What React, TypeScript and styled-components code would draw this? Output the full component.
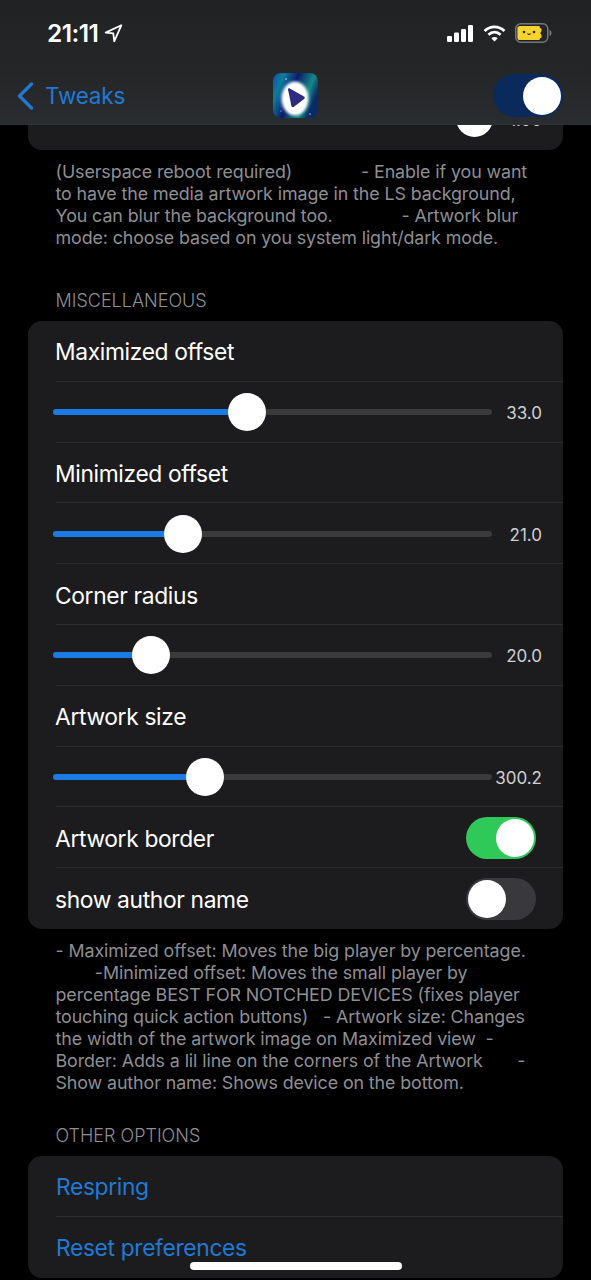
import React from 'react';
import styled, { createGlobalStyle } from 'styled-components';

const GlobalStyle = createGlobalStyle`
	html, body {
		margin: 0;
		padding: 0;
		background: #000;
	}
	* {
		box-sizing: border-box;
	}
`;

const sliders = [
	{ label: 'Maximized offset', value: '33.0', percent: 44.2 },
	{ label: 'Minimized offset', value: '21.0', percent: 29.6 },
	{ label: 'Corner radius', value: '20.0', percent: 22.3 },
	{ label: 'Artwork size', value: '300.2', percent: 34.6 },
];

const topNotes = [
	'(Userspace reboot required)              - Enable if you want',
	'to have the media artwork image in the LS background,',
	'You can blur the background too.              - Artwork blur',
	'mode: choose based on you system light/dark mode.',
];

const miscNotes = [
	'- Maximized offset: Moves the big player by percentage.',
	'        -Minimized offset: Moves the small player by',
	'percentage BEST FOR NOTCHED DEVICES (fixes player',
	'touching quick action buttons)   - Artwork size: Changes',
	'the width of the artwork image on Maximized view  -',
	'Border: Adds a lil line on the corners of the Artwork       -',
	'Show author name: Shows device on the bottom.',
];

const SignalIcon = () => (
	<svg width="27" height="17" viewBox="0 0 27 17" fill="#fff">
		<rect x="0" y="11" width="5" height="6" rx="1.2" />
		<rect x="7" y="7.5" width="5" height="9.5" rx="1.2" />
		<rect x="14" y="4" width="5" height="13" rx="1.2" />
		<rect x="21" y="0" width="5" height="17" rx="1.2" />
	</svg>
);

const WifiIcon = () => (
	<svg width="23" height="17" viewBox="0 0 24 18" fill="none" stroke="#fff" strokeWidth="3">
		<path d="M1.5 6.4C7.5 .6 16.5 .6 22.5 6.4" />
		<path d="M5.6 10.4C9.4 6.8 14.6 6.8 18.4 10.4" />
		<path d="M12 17.6L8.6 14C10.6 12.3 13.4 12.3 15.4 14Z" fill="#fff" stroke="none" />
	</svg>
);

const BatteryIcon = () => (
	<svg width="37" height="20" viewBox="0 0 37 20">
		<rect x=".75" y=".75" width="32" height="18.5" rx="5" fill="none" stroke="#77777a" strokeWidth="1.5" />
		<path d="M5 3h19.5c0 2 1.2 2.4 2 2.6v2.6c-1.4.3-1.4 3.3 0 3.6v2.6c-.8.2-2 .6-2 2.6H5a2.6 2.6 0 0 1-2.6-2.6V5.6A2.6 2.6 0 0 1 5 3z" fill="#f7d32c" />
		<circle cx="9" cy="9" r="1.3" fill="#2b2410" />
		<circle cx="19" cy="9" r="1.3" fill="#2b2410" />
		<path d="M12.5 10.5q1.5 2 3 0" fill="none" stroke="#2b2410" strokeWidth="1.1" />
		<path d="M34.5 7c1.3.4 2 1.5 2 3s-.7 2.6-2 3z" fill="#77777a" />
	</svg>
);

const LocationIcon = () => (
	<svg width="19" height="19" viewBox="0 0 18 18" fill="none" stroke="#fff" strokeWidth="1.7" strokeLinejoin="round">
		<path d="M16.4 1.2L1.6 8.2l7.2.6.9 7.6z" />
	</svg>
);

const BackChevron = () => (
	<svg width="17" height="28" viewBox="0 0 17 28" fill="none" stroke="#1f7ad6" strokeWidth="3.2" strokeLinecap="round" strokeLinejoin="round">
		<path d="M14.5 2L2.5 14l12 12" />
	</svg>
);

const AppIcon = () => (
	<svg width="45" height="45" viewBox="0 0 45 45">
		<defs>
			<linearGradient id="iconBg" x1="0" y1="0" x2="1" y2="0.4">
				<stop offset="0" stopColor="#0f4fa8" />
				<stop offset="0.22" stopColor="#0e7c9c" />
				<stop offset="0.5" stopColor="#0c1c6a" />
				<stop offset="0.82" stopColor="#148a84" />
				<stop offset="1" stopColor="#0b2a68" />
			</linearGradient>
			<filter id="iconGlow" x="-20%" y="-20%" width="140%" height="140%">
				<feGaussianBlur stdDeviation="0.8" />
			</filter>
		</defs>
		<rect width="45" height="45" rx="8" fill="url(#iconBg)" />
		<ellipse cx="22" cy="25.5" rx="15" ry="18" fill="#c8e4ff" opacity="0.3" filter="url(#iconGlow)" />
		<ellipse cx="22" cy="25.5" rx="13" ry="16.5" fill="#fff" filter="url(#iconGlow)" />
		<path d="M15 16.5c0-1 .9-1.5 1.8-1.1L31 23.6c1 .6 1 1.9.1 2.5L20.6 34c-.9.6-2 .1-2.2-.9z" fill="#2d2c82" />
		<circle cx="13" cy="6" r="0.8" fill="#cde" />
		<circle cx="37" cy="41" r="0.7" fill="#cde" />
		<circle cx="8" cy="38" r="0.6" fill="#cde" />
	</svg>
);

const Slider = ({ value, percent }: { value: string; percent: number }) => (
	<SliderRow>
		<Track>
			<TrackFill style={{ width: `${percent}%` }} />
			<Thumb style={{ left: `${percent}%` }} />
		</Track>
		<SliderValue>{value}</SliderValue>
	</SliderRow>
);

const App = () => {
	return (
		<Page>
			<GlobalStyle />
			<Header>
				<StatusBar>
					<Clock>
						21:11
						<LocationIcon />
					</Clock>
					<StatusIcons>
						<SignalIcon />
						<WifiIcon />
						<BatteryIcon />
					</StatusIcons>
				</StatusBar>
				<NavBar>
					<BackLink>
						<BackChevron />
						<span>Tweaks</span>
					</BackLink>
					<NavLogo>
						<AppIcon />
					</NavLogo>
					<NavSwitch>
						<NavKnob />
					</NavSwitch>
				</NavBar>
			</Header>
			<Content>
				<ClippedCard>
					<ClippedThumb />
					<ClippedValue>1.00</ClippedValue>
				</ClippedCard>
				<Notes>
					{topNotes.map((line) => (
						<NoteLine key={line}>{line}</NoteLine>
					))}
				</Notes>
				<SectionTitle $gap={41}>MISCELLANEOUS</SectionTitle>
				<Card>
					{sliders.map((item) => (
						<React.Fragment key={item.label}>
							<Row>
								<RowLabel>{item.label}</RowLabel>
							</Row>
							<Row>
								<Slider value={item.value} percent={item.percent} />
							</Row>
						</React.Fragment>
					))}
					<Row>
						<RowLabel>Artwork border</RowLabel>
						<Switch $on>
							<SwitchKnob />
						</Switch>
					</Row>
					<Row>
						<RowLabel>show author name</RowLabel>
						<Switch>
							<SwitchKnob />
						</Switch>
					</Row>
				</Card>
				<Notes>
					{miscNotes.map((line) => (
						<NoteLine key={line}>{line}</NoteLine>
					))}
				</Notes>
				<SectionTitle $gap={31}>OTHER OPTIONS</SectionTitle>
				<Card>
					<Row>
						<ActionLabel>Respring</ActionLabel>
					</Row>
					<Row>
						<ActionLabel>Reset preferences</ActionLabel>
					</Row>
				</Card>
			</Content>
			<HomeIndicator />
		</Page>
	);
};

const Page = styled.div`
	position: relative;
	width: 591px;
	height: 1280px;
	overflow: hidden;
	background: #000;
	color: #fff;
	font-family: Inter, 'Liberation Sans', sans-serif;
`;

const Header = styled.header`
	height: 125px;
	padding: 0 28px 0 17px;
	background: linear-gradient(180deg, #212223 0%, #242627 60%, #2a2d30 100%);
	border-bottom: 1px solid #2f3133;
`;

const StatusBar = styled.div`
	display: flex;
	align-items: center;
	justify-content: space-between;
	height: 66px;
	padding: 0 8px 0 30px;
`;

const Clock = styled.div`
	display: flex;
	align-items: center;
	gap: 6px;
	font-size: 24.5px;
	font-weight: 600;
	letter-spacing: -0.6px;
`;

const StatusIcons = styled.div`
	display: flex;
	align-items: center;
	gap: 9px;
	margin-right: 3px;
`;

const NavBar = styled.nav`
	position: relative;
	display: flex;
	align-items: center;
	justify-content: space-between;
	height: 59px;
`;

const BackLink = styled.div`
	display: flex;
	align-items: center;
	gap: 11px;
	color: #1f7ad6;
	font-size: 22.5px;
	letter-spacing: -0.2px;
`;

const NavLogo = styled.div`
	position: absolute;
	left: 256px;
	top: 7px;
	width: 45px;
	height: 45px;
`;

const NavSwitch = styled.div`
	display: flex;
	align-items: center;
	justify-content: flex-end;
	width: 70px;
	height: 43px;
	padding-right: 2px;
	border-radius: 22px;
	background: #0b2a5c;
`;

const NavKnob = styled.div`
	width: 38px;
	height: 38px;
	border-radius: 50%;
	background: #fff;
`;

const Content = styled.main`
	padding: 0 28px;
`;

const ClippedCard = styled.div`
	position: relative;
	height: 25px;
	overflow: hidden;
	border-radius: 0 0 14px 14px;
	background: #1c1c1e;
`;

const ClippedThumb = styled.div`
	position: absolute;
	left: 428px;
	top: -25px;
	width: 37px;
	height: 37px;
	border-radius: 50%;
	background: #fff;
`;

const ClippedValue = styled.div`
	position: absolute;
	right: 21px;
	top: -15px;
	font-size: 17px;
	color: #d0d0d2;
`;

const Notes = styled.div`
	padding: 11px 0 0 27.5px;
	color: #8e8e93;
	font-size: 17.85px;
	line-height: 22px;
	letter-spacing: -0.1px;
`;

const NoteLine = styled.div`
	white-space: pre;
`;

const SectionTitle = styled.h2<{ $gap: number }>`
	margin: 0;
	padding: ${(props) => props.$gap}px 0 9px 27.5px;
	color: #8e8e93;
	font-size: 18px;
	font-weight: 300;
	line-height: 22px;
`;

const Card = styled.section`
	overflow: hidden;
	border-radius: 14px;
	background: #1c1c1e;
`;

const Row = styled.div`
	position: relative;
	display: flex;
	align-items: center;
	justify-content: space-between;
	height: 60.8px;
	padding: 0 27px 0 28px;

	& + &::before {
		content: '';
		position: absolute;
		top: -1px;
		left: 28px;
		right: 0;
		height: 1px;
		background: #2c2c2e;
	}
`;

const RowLabel = styled.span`
	margin-left: -1px;
	padding-top: 1px;
	font-size: 22.8px;
	letter-spacing: -0.35px;
`;

const ActionLabel = styled(RowLabel)`
	margin-left: 0;
	padding-top: 0;
	color: #1f7ad6;
`;

const SliderRow = styled.div`
	display: flex;
	flex: 1;
	align-items: center;
	margin: 0 -6px 0 -3px;
`;

const Track = styled.div`
	position: relative;
	flex: 1;
	height: 6px;
	border-radius: 3px;
	background: #3a3a3c;
`;

const TrackFill = styled.div`
	height: 100%;
	border-radius: 3px;
	background: #1a7ae6;
`;

const Thumb = styled.div`
	position: absolute;
	top: 50%;
	width: 38px;
	height: 38px;
	border-radius: 50%;
	background: #fff;
	transform: translate(-50%, -50%);
`;

const SliderValue = styled.span`
	width: 50px;
	padding-top: 2px;
	color: #d0d0d2;
	font-size: 17px;
	text-align: right;
`;

const Switch = styled.div<{ $on?: boolean }>`
	display: flex;
	align-items: center;
	justify-content: ${(props) => (props.$on ? 'flex-end' : 'flex-start')};
	width: 70px;
	height: 42px;
	padding: 2px;
	border-radius: 21px;
	background: ${(props) => (props.$on ? '#2fc95a' : '#39393d')};
`;

const SwitchKnob = styled.div`
	width: 38px;
	height: 38px;
	border-radius: 50%;
	background: #fff;
`;

const HomeIndicator = styled.div`
	position: absolute;
	left: 190px;
	top: 1262px;
	width: 212px;
	height: 8px;
	border-radius: 4px;
	background: #fff;
`;

export default App;
